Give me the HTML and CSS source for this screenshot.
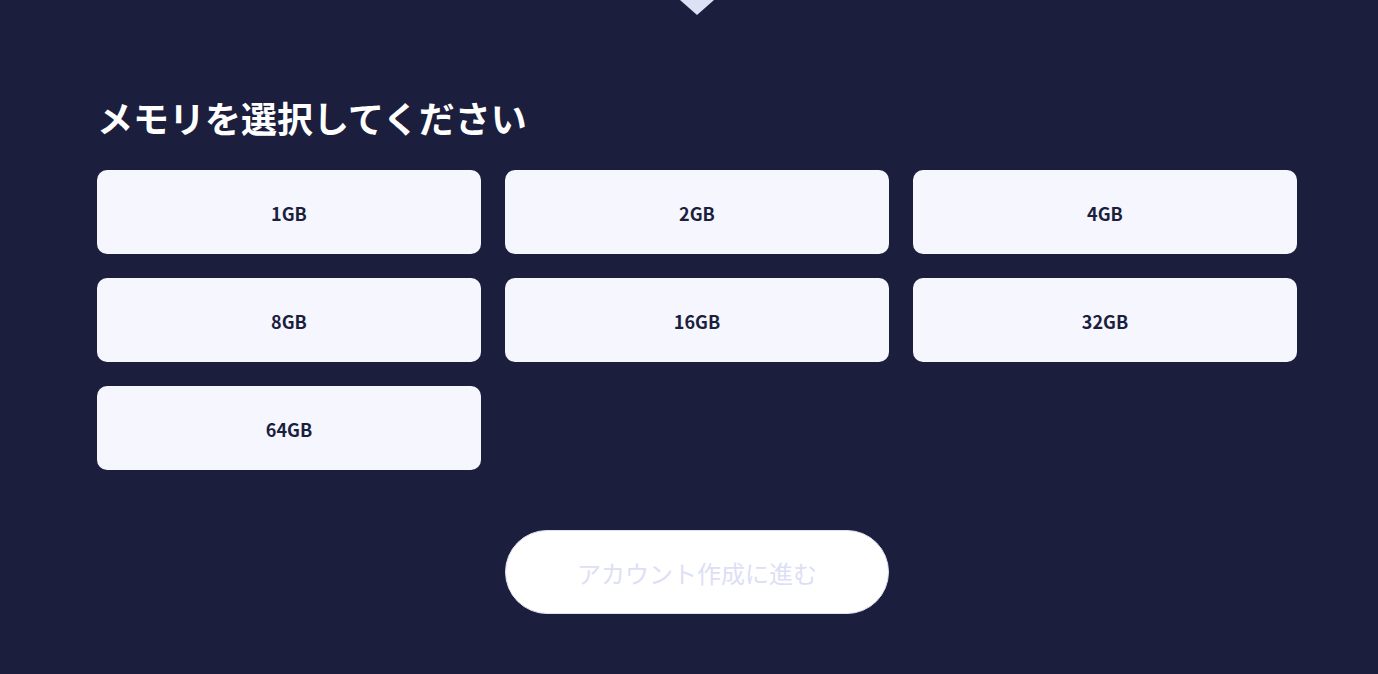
FILE: index.html
```html
<!DOCTYPE html>
<html lang="ja">
  <head>
    <meta charset="UTF-8" />
    <meta name="viewport" content="width=device-width, initial-scale=1.0" />
    <title>メモリ選択</title>
    <link rel="stylesheet" href="styles.css">
  </head>
  <body>
    <div class="step-container">
      <div class="step-arrow"></div>

      <h2 class="step-title">メモリを選択してください</h2>

      <div class="option-grid">
        <button class="option-card">1GB</button>
        <button class="option-card">2GB</button>
        <button class="option-card">4GB</button>
        <button class="option-card">8GB</button>
        <button class="option-card">16GB</button>
        <button class="option-card">32GB</button>
        <button class="option-card">64GB</button>
      </div>

      <div class="step-actions">
        <button class="next-button" disabled>アカウント作成に進む</button>
      </div>
    </div>
  </body>
</html>
```

FILE: styles.css
```css
* {
  margin: 0;
  padding: 0;
  box-sizing: border-box;
}

body {
  font-family: "Noto Sans CJK JP", "Noto Sans", sans-serif;
  background: #1b1e3d;
  min-height: 100vh;
}

.step-container {
  width: 1216px;
  margin: 0 auto;
  padding-left: 16px;
  padding-bottom: 60px;
}

/* little pointer down from the previous step */
.step-arrow {
  width: 0;
  height: 0;
  margin: 0 auto;
  border-left: 17px solid transparent;
  border-right: 17px solid transparent;
  border-top: 15px solid #dde1f6;
}

.step-title {
  margin-top: 82px;
  font-size: 36px;
  font-weight: 700;
  line-height: 40px;
  color: #ffffff;
}

.option-grid {
  margin-top: 33px;
  display: grid;
  grid-template-columns: repeat(3, 384px);
  gap: 24px;
}

.option-card {
  height: 84px;
  padding-top: 1px;
  background: #f5f6fe;
  border: none;
  border-radius: 10px;
  font-family: inherit;
  font-size: 18px;
  font-weight: 700;
  color: #1b1e3d;
  cursor: pointer;
}

.step-actions {
  margin-top: 60px;
  display: flex;
  justify-content: center;
}

.next-button {
  width: 384px;
  height: 84px;
  background: #ffffff;
  border: 1px solid #dde0f5;
  border-radius: 42px;
  font-family: inherit;
  font-size: 24px;
  font-weight: 400;
  color: #dde0f5;
}
```
